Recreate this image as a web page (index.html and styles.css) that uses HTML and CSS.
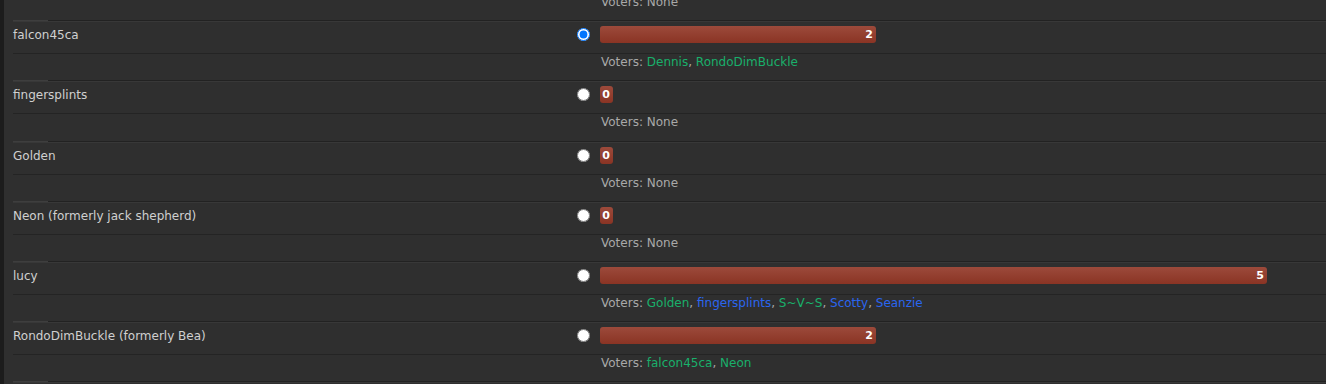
FILE: index.html
```html
<!DOCTYPE html>
<html>
<head>
<meta charset="utf-8">
<link rel="stylesheet" href="styles.css">
</head>
<body>
<div class="page">
  <div class="strip"></div>
  <div class="poll">
    <div class="voters first"><span class="lbl">Voters:</span> None</div>

    <div class="opt">
      <div class="name">falcon45ca</div>
      <div class="pick"><input type="radio" name="v" checked></div>
      <div class="barcell"><div class="bar" style="width:276px">2</div></div>
    </div>
    <div class="voters"><span class="lbl">Voters:</span> <a class="g">Dennis</a>, <a class="g">RondoDimBuckle</a></div>

    <div class="opt">
      <div class="name">fingersplints</div>
      <div class="pick"><input type="radio" name="v"></div>
      <div class="barcell"><div class="bar" style="width:13px">0</div></div>
    </div>
    <div class="voters tall"><span class="lbl">Voters:</span> None</div>

    <div class="opt">
      <div class="name">Golden</div>
      <div class="pick"><input type="radio" name="v"></div>
      <div class="barcell"><div class="bar" style="width:13px">0</div></div>
    </div>
    <div class="voters"><span class="lbl">Voters:</span> None</div>

    <div class="opt">
      <div class="name">Neon (formerly jack shepherd)</div>
      <div class="pick"><input type="radio" name="v"></div>
      <div class="barcell"><div class="bar" style="width:13px">0</div></div>
    </div>
    <div class="voters"><span class="lbl">Voters:</span> None</div>

    <div class="opt">
      <div class="name">lucy</div>
      <div class="pick"><input type="radio" name="v"></div>
      <div class="barcell"><div class="bar" style="width:667px">5</div></div>
    </div>
    <div class="voters"><span class="lbl">Voters:</span> <a class="g">Golden</a>, <a class="b">fingersplints</a>, <a class="g">S~V~S</a>, <a class="b">Scotty</a>, <a class="b">Seanzie</a></div>

    <div class="opt">
      <div class="name">RondoDimBuckle (formerly Bea)</div>
      <div class="pick"><input type="radio" name="v"></div>
      <div class="barcell"><div class="bar" style="width:276px">2</div></div>
    </div>
    <div class="voters"><span class="lbl">Voters:</span> <a class="g">falcon45ca</a>, <a class="g">Neon</a></div>
    <div class="opt tail"></div>
  </div>
</div>
</body>
</html>
```
FILE: styles.css
```css
html, body {
  margin: 0;
  padding: 0;
  background: #2f2f2f;
  overflow: hidden;
  height: 384px;
}
.page {
  display: flex;
  height: 384px;
  font-family: "DejaVu Sans", Verdana, sans-serif;
  font-size: 12px;
}
.strip {
  width: 4px;
  flex: none;
  background: #1c1c1c;
}
.poll {
  flex: 1;
  margin-left: 9px;
  margin-top: -6px;
}
.opt {
  position: relative;
  display: grid;
  grid-template-columns: 564px 13px 1fr;
  align-items: center;
  height: 25px;
  padding-top: 1px;
  padding-bottom: 6px;
  border-top: 1px solid #222;
  border-bottom: 1px solid #242424;
  box-shadow: inset 0 1px 0 #383838;
}
.opt::before {
  content: "";
  position: absolute;
  left: 0;
  top: -1px;
  width: 35px;
  height: 1px;
  background: #3e3e3e;
}
.name {
  color: #d0d0d0;
}
.pick {
  display: flex;
  align-items: center;
  justify-content: center;
}
.pick input {
  margin: 0;
  width: 13px;
  height: 13px;
}
.barcell {
  padding-left: 10px;
  display: flex;
}
.bar {
  box-sizing: border-box;
  height: 17px;
  line-height: 17px;
  border-radius: 3px;
  background: linear-gradient(#9c4a3b, #8a3424);
  color: #fff;
  font-weight: bold;
  font-size: 11px;
  text-align: right;
  padding-right: 3px;
}
.voters {
  height: 26px;
  line-height: 17px;
  padding-left: 588px;
  color: #a9a9a9;
}
.voters.tall {
  height: 27px;
}
.voters a {
  text-decoration: none;
}
.g { color: #19b06b; }
.b { color: #2a66f0; }
```
